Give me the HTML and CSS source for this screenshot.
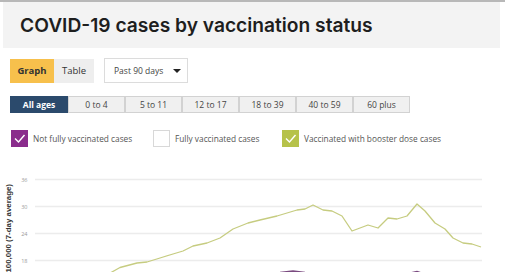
FILE: index.html
```html
<!DOCTYPE html>
<html>
<head>
<meta charset="utf-8">
<link rel="stylesheet" href="styles.css">
</head>
<body>
<div class="topline"></div>
<div class="title-box"><h1 class="title">COVID-19 cases by vaccination status</h1></div>
<div class="controls">
  <div class="toggle">
    <span class="tog tog-on">Graph</span><span class="tog">Table</span>
  </div>
  <div class="select"><span>Past 90 days</span><span class="caret"></span></div>
</div>
<div class="ages">
  <span class="age age-on">All ages</span>
  <span class="age">0 to 4</span>
  <span class="age">5 to 11</span>
  <span class="age">12 to 17</span>
  <span class="age">18 to 39</span>
  <span class="age">40 to 59</span>
  <span class="age">60 plus</span>
</div>
<div class="legend">
  <div class="leg"><span class="box box-purple"><svg viewBox="0 0 17 17" width="17" height="17"><path d="M4 8.5 L7.5 12 L13.5 5" fill="none" stroke="#fff" stroke-width="1.4"/></svg></span><span class="leg-text">Not fully vaccinated cases</span></div>
  <div class="leg"><span class="box box-empty"></span><span class="leg-text">Fully vaccinated cases</span></div>
  <div class="leg"><span class="box box-green"><svg viewBox="0 0 17 17" width="17" height="17"><path d="M4 8.5 L7.5 12 L13.5 5" fill="none" stroke="#fff" stroke-width="1.4"/></svg></span><span class="leg-text">Vaccinated with booster dose cases</span></div>
</div>
<svg class="chart" width="520" height="126" viewBox="0 146 520 126">
  <g stroke="#ececec" stroke-width="1.3">
    <line x1="35" y1="178.5" x2="482" y2="178.5"/>
    <line x1="35" y1="205.5" x2="482" y2="205.5"/>
    <line x1="35" y1="232.5" x2="482" y2="232.5"/>
    <line x1="35" y1="259.5" x2="482" y2="259.5"/>
  </g>
  <g class="ylab" font-size="5.5" fill="#999" text-anchor="end">
    <text x="27.5" y="180.5">36</text>
    <text x="27.5" y="207.5">30</text>
    <text x="27.5" y="234.5">24</text>
    <text x="27.5" y="261.5">18</text>
  </g>
  <text class="ytitle" transform="translate(10.5 183) rotate(-90)" text-anchor="end">100,000 (7-day average)</text>
  <polyline fill="none" stroke="#c6cc80" stroke-width="1.3" stroke-linejoin="round" points="104,274 111,271.5 120,266.5 137,262 147,261 160,257 173,253 183,250 193,245 207,242 220,237 233,228 248,222 260,219 277,215 297,209 305,208 313,204 323,209 332,210 342,215 352,230 360,227 368,224 378,227 388,217 397,218 407,215 417,203 425,210 435,222 445,228 453,237 463,242 472,243 481,246"/>
  <polyline fill="none" stroke="#7a4a80" stroke-width="1.3" points="260,272 280,271.5 293,270 305,271.5 330,272.5"/>
  <polyline fill="none" stroke="#7a4a80" stroke-width="1.3" points="405,273 417,270.5 425,273"/>
</svg>
</body>
</html>
```

FILE: styles.css
```css
html, body {
  margin: 0;
  padding: 0;
  background: #fff;
  width: 520px;
  height: 272px;
  overflow: hidden;
  font-family: "Open Sans", "Liberation Sans", sans-serif;
}
.topline {
  height: 2px;
  width: 505px;
  background: #b8b8b8;
}
.title-box {
  margin-left: 3px;
  width: 480px;
  height: 46px;
  padding-left: 17px;
  background: #f3f3f3;
  display: flex;
  align-items: center;
}
.title {
  margin: 0;
  font-family: "Inter", "Open Sans", sans-serif;
  font-weight: 600;
  font-size: 19.2px;
  color: #1e1e1e;
  letter-spacing: 0;
  white-space: nowrap;
}
.controls {
  display: flex;
  align-items: flex-start;
  margin-top: 10px;
  padding-left: 10px;
  gap: 10px;
}
.toggle {
  display: flex;
  margin-top: 1px;
}
.tog {
  height: 24px;
  line-height: 24px;
  font-size: 9.5px;
  color: #333;
  background: #eeeeee;
  text-align: center;
  width: 40px;
}
.tog-on {
  width: 44px;
  background: #f7c04c;
  font-weight: 700;
}
.select {
  box-sizing: border-box;
  width: 84px;
  height: 25px;
  border: 1px solid #dcdcdc;
  font-size: 8.5px;
  color: #444;
  padding-left: 9px;
  display: flex;
  align-items: center;
  gap: 10px;
  white-space: nowrap;
}
.caret {
  width: 0;
  height: 0;
  border-left: 4px solid transparent;
  border-right: 4px solid transparent;
  border-top: 4px solid #222;
}
.ages {
  display: flex;
  margin-top: 13px;
  padding-left: 10px;
}
.age {
  box-sizing: border-box;
  width: 57px;
  height: 17px;
  line-height: 15px;
  text-align: center;
  font-size: 8.5px;
  color: #444;
  background: #f0f0f0;
  border: 1px solid #d2d2d2;
  white-space: nowrap;
}
.age-on {
  width: 58px;
  background: #2b4a6c;
  border-color: #2b4a6c;
  color: #fff;
  font-weight: 700;
}
.legend {
  display: flex;
  margin-top: 17px;
  padding-left: 11px;
  height: 17px;
  align-items: center;
}
.leg {
  display: flex;
  align-items: center;
  gap: 5px;
}
.leg:nth-child(1) { width: 142px; }
.leg:nth-child(2) { width: 129px; }
.box {
  box-sizing: border-box;
  width: 17px;
  height: 17px;
  display: block;
}
.box svg { display: block; }
.box-purple { background: #8a2c8c; }
.box-green { background: #b6c24a; }
.box-empty { border: 1px solid #d8d8d8; background: #fff; }
.leg-text {
  font-size: 8.3px;
  color: #555;
  white-space: nowrap;
}
.chart {
  display: block;
}
.ytitle {
  font-family: "Liberation Sans", sans-serif;
  font-weight: 700;
  font-size: 7.9px;
  fill: #333;
}
```
